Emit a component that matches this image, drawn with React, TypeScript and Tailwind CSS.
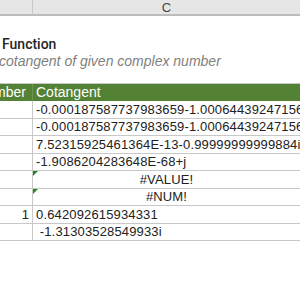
const rows: { b?: string; c: string; center?: boolean; flag?: boolean }[] = [
  { c: '-0.000187587737983659-1.00064439247156i' },
  { c: '-0.000187587737983659-1.00064439247156i' },
  { c: '7.52315925461364E-13-0.99999999999884i' },
  { c: '-1.9086204283648E-68+j' },
  { c: '#VALUE!', center: true, flag: true },
  { c: '#NUM!', center: true, flag: true },
  { b: '1', c: '0.642092615934331' },
  { c: ' -1.31303528549933i' },
];

export default function App() {
  return (
    <div className="w-[300px] h-[300px] overflow-hidden bg-white text-[13px] text-[#222]" style={{ fontFamily: '"Liberation Sans", Arial, sans-serif' }}>
      {/* column letters */}
      <div className="flex h-[16px] bg-[#e6e6e6] border-b-2 border-[#bcbcbc]">
        <div className="w-[33px] shrink-0 border-r border-[#c8c8c8]" />
        <div className="flex-1 flex items-center justify-center text-[#444] text-[13px] leading-none">C</div>
      </div>

      {/* title block */}
      <div className="h-[68px] border-b border-[#c8c8c8] flex flex-col pt-[19px] whitespace-nowrap">
        <div className="pl-[2px] text-[14px] font-medium leading-[18px] text-[#262626]" style={{ fontFamily: 'Roboto, sans-serif' }}>
          Function
        </div>
        <div className="-ml-[1px] italic text-[14px] leading-[17px] text-[#7f7f7f]">cotangent of given complex number</div>
      </div>

      {/* green header */}
      <div className="flex h-[17px] bg-[#548235] text-white text-[14px]">
        <div className="w-[33px] shrink-0 flex items-center justify-end pr-[6px] border-r border-[#6d9650] whitespace-nowrap overflow-hidden">
          mber
        </div>
        <div className="flex-1 flex items-center pl-[3px]">Cotangent</div>
      </div>

      {rows.map((r, i) => (
        <div key={i} className="flex h-[17.5px] border-b border-[#c8c8c8]">
          <div className="w-[33px] shrink-0 flex items-center justify-end pr-[3px] border-r border-[#c8c8c8]">{r.b}</div>
          <div className={`relative flex-1 flex items-center whitespace-pre overflow-hidden tracking-[0.15px] ${r.center ? 'justify-center' : 'pl-[3px]'}`}>
            {r.flag && (
              <span className="absolute left-0 top-0 w-0 h-0 border-t-[5px] border-r-[5px] border-t-[#1e8a1e] border-r-transparent" />
            )}
            {r.c}
          </div>
        </div>
      ))}
    </div>
  );
}
